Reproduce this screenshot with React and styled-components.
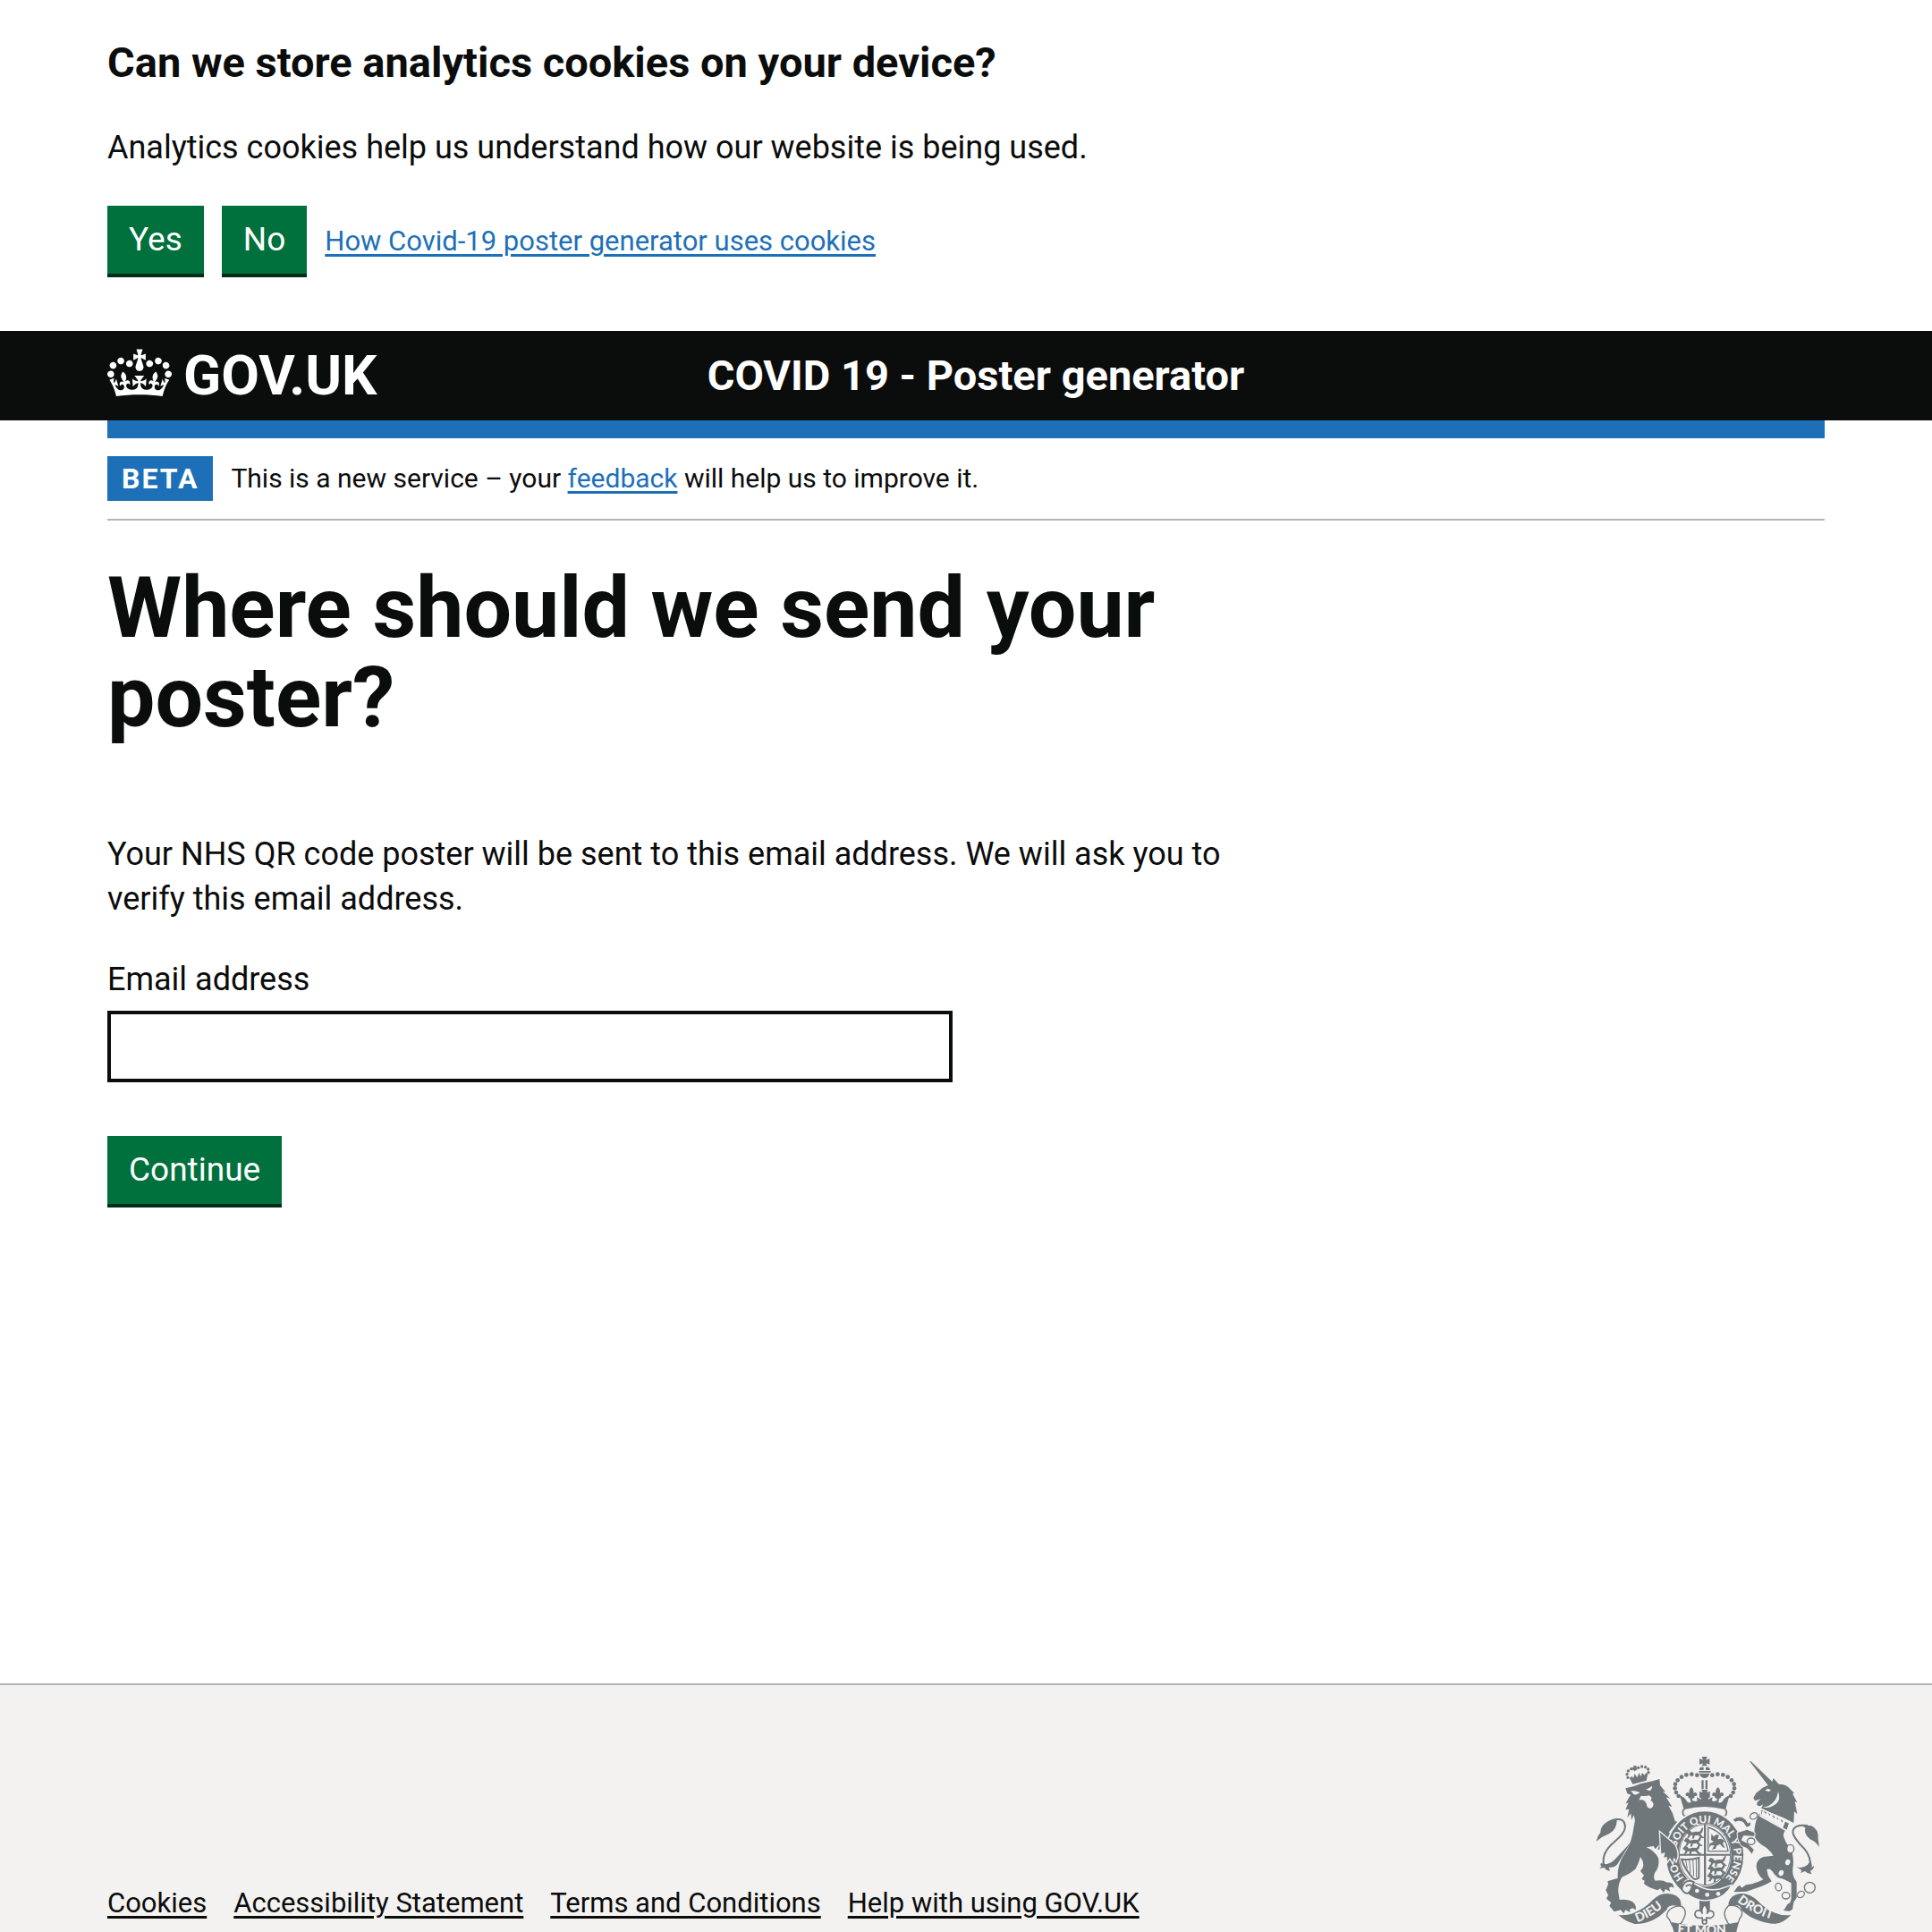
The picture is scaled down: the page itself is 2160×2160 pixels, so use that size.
import React from "react";
import styled, { createGlobalStyle, css } from "styled-components";

const ink = "#0b0c0c";
const blue = "#1d70b8";
const green = "#00703c";
const line = "#b1b4b6";
const stone = "#f3f2f1";
const crest = "#6f777b";

const GlobalStyle = createGlobalStyle`
  *, *::before, *::after { box-sizing: border-box; }
  body {
    margin: 0;
    background: #fff;
    color: ${ink};
    font-family: Roboto, "Liberation Sans", Arial, sans-serif;
    font-size: 36px;
    line-height: 50px;
  }
`;

const Page = styled.div`
  height: 100vh;
  overflow: hidden;
`;

const Container = styled.div`
  margin: 0 120px;
`;

const TwoThirds = styled.div`
  max-width: 1260px;
`;

const CookieBanner = styled.section`
  padding: 40px 0 60px;
`;

const BannerTitle = styled.h2`
  margin: 0 0 40px;
  font-size: 47px;
  line-height: 60px;
  font-weight: 700;
`;

const Paragraph = styled.p`
  margin: 0 0 40px;
`;

const ButtonRow = styled.div`
  display: flex;
  align-items: center;
  gap: 20px;
`;

const Button = styled.button`
  display: block;
  height: 80px;
  margin: 0;
  padding: 0 24px;
  border: 0;
  border-bottom: 4px solid #002d18;
  border-radius: 0;
  background: ${green};
  color: #fff;
  font: inherit;
  font-size: 37px;
  cursor: pointer;
`;

const Link = styled.a`
  color: ${(p) => (p.$dark ? ink : blue)};
  text-decoration: underline;
  text-decoration-thickness: 3px;
  text-underline-offset: 4px;
`;

const SmallLink = styled(Link)`
  font-size: 31px;
  line-height: 40px;
`;

const Header = styled.header`
  background: ${ink};
  color: #fff;
`;

const HeaderRow = styled(Container)`
  display: grid;
  grid-template-columns: 1fr 2fr;
  column-gap: 46px;
  align-items: center;
  height: 100px;
`;

const headerLink = css`
  color: #fff;
  font-weight: 700;
  text-decoration: none;
`;

const LogoLink = styled.a`
  ${headerLink}
  display: flex;
  align-items: flex-start;
  gap: 13px;
  font-size: 62px;
  line-height: 60px;
`;

const ServiceLink = styled.a`
  ${headerLink}
  font-size: 47px;
  line-height: 60px;
`;

const Crown = styled.svg`
  display: block;
  width: 72px;
  height: 54px;
  fill: currentColor;
`;

const BlueBar = styled.div`
  height: 20px;
  background: ${blue};
`;

const PhaseBanner = styled.div`
  display: flex;
  align-items: center;
  gap: 20px;
  padding: 20px 0;
  border-bottom: 2px solid ${line};
`;

const Tag = styled.strong`
  padding: 5px 16px;
  background: ${blue};
  color: #fff;
  font-size: 32px;
  line-height: 40px;
  letter-spacing: 2px;
`;

const PhaseText = styled.span`
  font-size: 30px;
  line-height: 40px;
`;

const Main = styled.main`
  min-height: 1300px;
  padding: 48px 0 60px;
`;

const Title = styled.h1`
  margin: 0 0 100px;
  font-size: 95px;
  line-height: 100px;
  font-weight: 700;
`;

const Field = styled.div`
  margin-bottom: 60px;
`;

const Label = styled.label`
  display: block;
  margin-bottom: 10px;
`;

const TextInput = styled.input`
  display: block;
  width: 75%;
  height: 80px;
  margin: 0;
  padding: 10px;
  border: 4px solid ${ink};
  border-radius: 0;
  background: #fff;
  font: inherit;
`;

const Footer = styled.footer`
  border-top: 2px solid ${line};
  background: ${stone};
  padding: 80px 0;
`;

const FooterRow = styled(Container)`
  display: flex;
  align-items: flex-end;
  justify-content: space-between;
  height: 264px;
`;

const FooterLinks = styled.ul`
  display: flex;
  gap: 30px;
  margin: 0 0 80px;
  padding: 0;
  list-style: none;
  line-height: 40px;
`;

const Arms = styled.svg`
  display: block;
  align-self: flex-start;
  width: 250px;
  height: 204px;
  margin-right: 6px;
  fill: ${crest};
`;

const ArmsText = styled.text`
  font-family: Lato, "Open Sans", sans-serif;
  font-size: ${(p) => p.$size}px;
  font-weight: 900;
  fill: ${stone};
`;

const Pearls = ({ points, r }) =>
  points.map(([cx, cy]) => <circle key={`${cx}-${cy}`} cx={cx} cy={cy} r={r} />);

const leftPearls = [
  [412, 134], [394, 131], [376, 133], [360, 140], [347, 151], [339, 164], [338, 178], [342, 192], [350, 204],
];
const rightPearls = leftPearls.map(([x, y]) => [875 - x, y]);
const lionPearls = [
  [180, 142], [177, 131], [181, 120], [191, 113], [201, 112],
  [215, 109], [227, 105], [239, 107], [248, 114], [249, 125],
];

const Fleur = ({ x, y }) => (
  <path
    transform={`translate(${x} ${y})`}
    d="M0-24c9 9 9 17 4 25 2-8 12-9 15-2 2 6-4 9-8 6 1 7-4 10-8 9v8h-6v-8c-4 1-9-2-8-9-4 3-10 0-8-6 3-7 13-6 15 2-5-8-5-16 4-25z"
  />
);

const Walker = ({ x, y }) => (
  <path
    transform={`translate(${x} ${y})`}
    d="M2-4l7-9 9 3 4 6 14-3 12 1 6-8 3-7 4 3-4 14-6 5 7 9 6 1-2 4-9-1-9-9-12 2-2 9-8 2 2-4 1-8-6-1-6 9-8 0 5-6 1-6-8-3z"
  />
);

function CrownLogo() {
  return (
    <Crown viewBox="0 0 132 97" aria-hidden="true">
      <path
        fillRule="evenodd"
        d="M25 30.2c3.5 1.5 7.7-.2 9.1-3.7 1.5-3.6-.2-7.8-3.9-9.2-3.6-1.4-7.6.3-9.1 3.9-1.4 3.5.3 7.5 3.9 9zM9 39.5c3.6 1.5 7.8-.2 9.2-3.7 1.5-3.6-.2-7.8-3.9-9.1-3.6-1.5-7.6.2-9.1 3.8-1.4 3.5.3 7.5 3.8 9zM4.4 57.2c3.5 1.5 7.7-.2 9.1-3.8 1.5-3.6-.2-7.7-3.9-9.1-3.5-1.5-7.6.3-9.1 3.8-1.4 3.5.3 7.6 3.9 9.1zm38.3-21.4c3.5 1.5 7.7-.2 9.1-3.8 1.5-3.6-.2-7.7-3.9-9.1-3.6-1.5-7.6.3-9.1 3.8-1.3 3.6.4 7.7 3.9 9.1zm64.4-5.6c-3.6 1.5-7.8-.2-9.1-3.7-1.5-3.6.2-7.8 3.8-9.2 3.6-1.4 7.7.3 9.2 3.9 1.3 3.5-.4 7.5-3.9 9zm15.9 9.3c-3.6 1.5-7.7-.2-9.1-3.7-1.5-3.6.2-7.8 3.7-9.1 3.6-1.5 7.7.2 9.2 3.8 1.5 3.5-.3 7.5-3.8 9zm4.7 17.7c-3.6 1.5-7.8-.2-9.2-3.8-1.5-3.6.2-7.7 3.9-9.1 3.6-1.5 7.7.3 9.2 3.8 1.3 3.5-.4 7.6-3.9 9.1zM89.3 35.8c-3.6 1.5-7.8-.2-9.2-3.8-1.4-3.6.2-7.7 3.9-9.1 3.6-1.5 7.7.3 9.2 3.8 1.4 3.6-.3 7.7-3.9 9.1zM69.7 17.7l8.9 4.7V9.3l-8.9 2.8c-.2-.3-.5-.6-.9-.9L72.4 0H59.6l3.5 11.2c-.3.3-.6.5-.9.9l-8.8-2.8v13.1l8.8-4.7c.3.3.6.7.9.9l-5 15.4v.1c-.2.8-.4 1.6-.4 2.4 0 4.1 3.1 7.5 7 8.1h.2c.3 0 .7.1 1 .1.4 0 .7 0 1-.1h.2c4-.6 7.1-4.1 7.1-8.1 0-.8-.1-1.7-.4-2.4V34l-5.1-15.4c.4-.2.7-.6 1-.9zM66 92.8c16.9 0 32.8 1.1 47.1 3.2 4-16.9 8.9-26.7 14-33.5l-9.6-3.4c1 4.9 1.1 7.2 0 10.2-1.5-1.4-3-4.3-4.2-8.7L108.6 76c2.8-2 5-3.2 7.5-3.3-4.4 9.4-10 11.9-13.6 11.2-4.3-.8-6.3-4.6-5.6-7.9 1-4.7 5.7-5.9 8-.5 4.3-8.7-3-11.4-7.6-8.8 7.1-7.2 7.9-13.5 2.1-21.1-8 6.1-8.1 12.3-4.5 20.8-4.7-5.4-12.1-2.5-9.5 6.2 3.4-5.2 7.9-2 7.2 3.1-.6 4.3-6.4 7.8-13.5 7.2-10.3-.9-10.9-8-11.2-13.8 2.5-.5 7.1 1.8 11 7.3L80.2 60c-4.1 4.4-8 5.3-12.3 5.4 1.4-4.4 8-11.6 8-11.6H55.5s6.4 7.2 7.9 11.6c-4.2-.1-8-1-12.3-5.4l1.4 16.4c3.9-5.5 8.5-7.7 10.9-7.3-.3 5.8-.9 12.8-11.1 13.8-7.2.6-12.9-2.9-13.5-7.2-.7-5 3.8-8.3 7.1-3.1 2.7-8.7-4.6-11.6-9.4-6.2 3.7-8.5 3.6-14.7-4.6-20.8-5.8 7.6-5 13.9 2.2 21.1-4.7-2.6-11.9.1-7.7 8.8 2.3-5.5 7.1-4.2 8.1.5.7 3.3-1.3 7.1-5.7 7.9-3.5.7-9-1.8-13.5-11.2 2.5.1 4.7 1.3 7.5 3.3l-4.7-15.4c-1.2 4.4-2.7 7.2-4.3 8.7-1.1-3-.9-5.3 0-10.2l-9.5 3.4c5 6.9 9.9 16.7 14 33.5 14.8-2.1 30.8-3.2 47.7-3.2z"
      />
    </Crown>
  );
}

function RoyalArms() {
  return (
    <Arms viewBox="72 72 750 612" role="img" aria-label="Royal coat of arms">
      <defs>
        <path id="garter" d="M372 482A98 108 0 1 1 501 485" />
        <path id="ribbonLeft" d="M211 627Q263 611 322 556" />
        <path id="ribbonRight" d="M546 558Q603 604 690 624" />
        <path id="ribbonMid" d="M346 664Q437 672 540 662" />
      </defs>

      {/* central crown */}
      <path d="M428 72h18l-4 11 12-5v20l-12-4 4 9h-18l4-9-12 4V78l12 5z" />
      <path d="M424 107h10v10h-15q1-7 5-10zm17 0h10q4 4 5 10h-15zM418 120h40v5h-40zM420 128h34q-3 14-17 16-14-2-17-16z" />
      <path d="M427 151h7v30h-7zm13 0h7v30h-7z" />
      <Pearls points={leftPearls} r={7} />
      <Pearls points={rightPearls} r={7} />
      <path d="M354 202q15 5 22 17 5 10 16 6l-4-13q13 14 25 8l-2-12q8 3 14 8l-1-16-4-9h35l-4 9-1 16q6-5 14-8l-2 12q12 6 25-8l-4 13q11 4 16-6 7-12 22-17l-13 45q-74-18-141 0z" />
      <path d="M420 188l12 6-5-11h21l-5 11 12-6v23l-12-6 4 13h-19l4-13-12 6z" />
      <Fleur x={393} y={198} />
      <Fleur x={482} y={198} />
      <path fill={stone} stroke={crest} strokeWidth="5" d="M372 246q65-17 131 0 8 3 8 13t-9 13q-65-24-129 0-9-3-9-13t8-13z" />

      {/* lion */}
      <Pearls points={lionPearls} r={5} />
      <path d="M200 101l5 2 4-1-1 5 5 2-4 4 3 5-6-1-3 5-3-5-5 1 2-5-4-3 5-2z" />
      <path d="M186 144l8-7 4 8 5-16 8 13 7-16 5 13 5-13 8 8 4-7 7 2-5 23-46 12z" />
      <path d="M172 178L198 172L222 163L262 154L286 147L288 168L306 190L297 188L322 212L308 208L328 240L316 236L330 262L338 288L346 290L318 325L335 355Q350 380 350 405L344 425L336 412L332 432L322 414L312 428L312 408L300 412L304 394L290 400L294 382L280 384L286 366L272 382L266 372L242 376Q270 388 282 412Q288 440 270 462Q264 478 272 488Q296 484 312 494Q334 492 334 512L326 508L318 512L322 524L306 516L300 528L288 514L280 520Q250 512 234 498L236 488L226 482L234 470L222 456L230 444Q236 428 222 408Q216 430 206 448Q190 464 160 476Q146 500 148 526L152 552Q178 550 190 556Q210 566 206 586L196 580L186 584L188 594L172 586L166 598L156 586L134 592L118 572L124 562L108 548L114 536L106 520L114 500L112 490L136 482L146 480Q144 440 162 408Q188 372 196 330L204 284L200 268L192 284L190 262L178 276L184 248L172 250L182 226L172 230L184 208L190 200L178 196Z" />
      <path fill={stone} d="M190 186q18 0 31 6-12 10-22 6zM240 182q12-5 22-12-2 15-10 16zM224 203q14 3 28-1l8 8-4 8q12 7 9 18-4 11-14 9-9-4-8-14l-6-10-10-5q-8 3-9-1z" />
      <path d="M74 356q5-20 14-30 0-30 42-45l14-3q-5 6-1 10-1 28-24 41-24 9-45 27z" />
      <path fill="none" stroke={crest} strokeWidth="6" d="M138 283q31-6 33 23 0 22-38 53-42 35-34 75" />
      <path d="M90 429q8 4 20 3 18-5 28-17l53-57-40 64q-10 24-35 21l4 12q-15-1-18-11l-17 2q5-5 7-7-7-3-2-10z" />

      {/* unicorn */}
      <path d="M588 87L593 88L664 156L668 144L686 164Q712 164 724 180L738 194L732 196L748 226L740 222L748 264L738 256L736 294L700 276L626 246L634 232Q618 244 612 232L614 224L626 214L606 220L601 210L610 194L632 176L650 168Z" />
      <path fill={stone} d="M640 184l10-5 10 5-8 6zM684 188q10 28-7 42-20 16-45 12 46-8 52-54z" />
      <path d="M622 262L714 314Q700 324 702 340Q708 360 722 376Q738 400 734 440Q728 470 746 492L746 545L736 560L732 584L722 590L702 588L716 566L724 562L728 548L728 496Q700 480 684 478Q672 470 664 456Q656 446 646 450L650 470L662 490Q640 504 608 514L578 524L535 526L548 508L556 504L562 512L576 502Q610 498 634 484Q616 470 612 448Q606 420 634 408L668 404Q650 378 632 370Q612 356 604 338L604 330Q604 290 622 262Z" />
      <path fill={crest} stroke={stone} strokeWidth="5" d="M626 247l97 48-9 26-90-50z" />
      <path fill={stone} d="M633 250l9 15 5-10 8 15 5-8 10 17 5-12 8 17 4-10 11 20 3-15 7 10-8 22-73-41z" />
      <g fill={stone}>
        <ellipse cx="716" cy="426" rx="8" ry="10" transform="rotate(25 716 426)" />
        <ellipse cx="694" cy="462" rx="8" ry="10" transform="rotate(25 694 462)" />
      </g>
      <g fill={stone} stroke={crest} strokeWidth="4">
        <ellipse cx="602" cy="271" rx="13" ry="10" transform="rotate(-30 602 271)" />
        <ellipse cx="725" cy="381" rx="12" ry="14" />
        <ellipse cx="685" cy="509" rx="10" ry="13" transform="rotate(-10 685 509)" />
        <ellipse cx="710" cy="538" rx="13" ry="11" />
        <ellipse cx="760" cy="534" rx="13" ry="10" transform="rotate(-35 760 534)" />
        <circle cx="790" cy="511" r="18" />
      </g>
      <path d="M764 305q14-3 30-2 27 11 24 45l4 27q-13-19-31-26-22-17-16-39z" />
      <path fill="none" stroke={crest} strokeWidth="6" d="M783 303q-48-6-50 22 1 18 38 55 25 28 21 68" />
      <path d="M745 441q20 8 38-7l8-12q8 7 5 22l8-7q0 13-12 18l4 11q-14-1-22-10l-15 6 4-9z" />

      {/* garter and shield */}
      <ellipse cx="438" cy="402" rx="134" ry="152" fill={stone} />
      <ellipse cx="438" cy="402" rx="109" ry="126" fill="none" stroke={crest} strokeWidth="41" />
      <ellipse cx="438" cy="401" rx="86" ry="102" fill={stone} stroke={crest} strokeWidth="3" />
      <path d="M435 299h7v203h-7zM352 398h172v6H352z" />
      <Walker x={372} y={330} />
      <Walker x={366} y={357} />
      <Walker x={362} y={384} />
      <Walker x={448} y={424} />
      <Walker x={446} y={450} />
      <Walker x={444} y={476} />
      <path fill="none" stroke={crest} strokeWidth="4" d="M449 309v80h67q-8-62-67-80z" />
      <path d="M460 331l8 9 10-8 8 5-5 12 13-2 10 8-6 8 8 15-8-2-9-11-12 6-3 10-12 2 8-14-12 1-6 9 2-15 14-7-9-6z" />
      <path fill="none" stroke={crest} strokeWidth="6" d="M360 416q30 4 58-5v67q-9 8-18 3-29-30-40-65z" />
      <path fill="none" stroke={crest} strokeWidth="3" d="M374 419l5 28M386 419l4 43M398 417l3 55M409 415l1 62" />
      <path stroke={stone} strokeWidth="4" d="M365 501q4-14 18-17l22 15q40 26 83 17l41-14q-20 40-65 50-49 10-86-21z" />
      <g fill={stone} stroke={crest} strokeWidth="6">
        <path d="M401 493q-17-11-31 2-16 19-3 30 14 13 24-5z" />
        <path fill="none" d="M374 507q17-12 27 5" />
      </g>
      <g fill={stone}>
        <circle cx="412" cy="522" r="7" />
        <circle cx="446" cy="535" r="7" />
        <circle cx="483" cy="532" r="7" />
      </g>
      <ArmsText $size={35}>
        <textPath href="#garter" startOffset="1%">HO</textPath>
        <textPath href="#garter" startOffset="23%">SOIT QUI MAL Y PENSE</textPath>
      </ArmsText>

      {/* paws laid over the garter */}
      <path stroke={stone} strokeWidth="4" d="M286 322L338 366Q350 388 348 408L342 426L335 414L331 433L321 415L311 429L309 410L298 414L302 396L290 400Z" />
      <path stroke={stone} strokeWidth="3" d="M532 284Q544 270 562 274Q580 282 582 294L592 290L592 304L578 310L566 292L552 288L540 292ZM606 326L580 316L546 326Q544 350 560 372L580 380L596 400L604 384L592 372L578 360L562 352L568 338L606 340Z" />
      <ellipse cx="593" cy="356" rx="13" ry="11" fill={stone} stroke={crest} strokeWidth="4" />

      {/* motto ribbon */}
      <path d="M148 603q31 3 56-9 36-15 59-41 30-31 68-19 29 8 28 40l-30-3q-19 4-17 12-45 51-109 50-30-7-55-30z" />
      <path d="M727 603q-30 4-57-8-35-18-55-40-37-34-73-20-25 9-25 38l28-3q17 4 15 16 29 27 60 36 32 12 57 10 25-3 50-29z" />
      <path fill={stone} stroke={crest} strokeWidth="4" d="M360 574q-30-3-45 17-10 15 4 27l11 23q31-5 34-20 19-33-4-47zM517 572q29-5 43 14 8 12-5 29l-10 28q-30-5-33-20-18-30 5-51z" />
      <path d="M326 627q111 24 225 0l-12 57H340z" />
      <ArmsText $size={42}>
        <textPath href="#ribbonLeft">DIEU</textPath>
      </ArmsText>
      <ArmsText $size={42}>
        <textPath href="#ribbonRight">DROIT</textPath>
      </ArmsText>
      <ArmsText $size={42}>
        <textPath href="#ribbonMid">ET MON</textPath>
      </ArmsText>

      {/* plant badge */}
      <path d="M420 554q17 5 35 0v35h-35z" />
      <g fill={stone} stroke={crest} strokeWidth="5">
        <path d="M437 568q14 14 8 31 7-15 20-7 10 14-9 22l-12-2q-1 6 0 9h-14l-1-9q-20 5-24-10 0-17 16-14 7 2 9 11-6-17 7-31z" />
        <circle cx="437" cy="626" r="7" />
      </g>
    </Arms>
  );
}

const footerItems = ["Cookies", "Accessibility Statement", "Terms and Conditions", "Help with using GOV.UK"];

export default function App() {
  return (
    <Page>
      <GlobalStyle />
      <CookieBanner aria-labelledby="cookie-title">
        <Container>
          <BannerTitle id="cookie-title">Can we store analytics cookies on your device?</BannerTitle>
          <Paragraph>Analytics cookies help us understand how our website is being used.</Paragraph>
          <ButtonRow>
            <Button type="button">Yes</Button>
            <Button type="button">No</Button>
            <SmallLink href="#cookies">How Covid-19 poster generator uses cookies</SmallLink>
          </ButtonRow>
        </Container>
      </CookieBanner>

      <Header>
        <HeaderRow>
          <LogoLink href="#home">
            <CrownLogo />
            <span>GOV.UK</span>
          </LogoLink>
          <ServiceLink href="#service">COVID 19 - Poster generator</ServiceLink>
        </HeaderRow>
      </Header>

      <Container>
        <BlueBar />
        <PhaseBanner>
          <Tag>BETA</Tag>
          <PhaseText>
            This is a new service – your <Link href="#feedback">feedback</Link> will help us to improve it.
          </PhaseText>
        </PhaseBanner>

        <Main>
          <TwoThirds>
            <Title>Where should we send your poster?</Title>
            <Paragraph>
              Your NHS QR code poster will be sent to this email address. We will ask you to verify this email
              address.
            </Paragraph>
            <form onSubmit={(e) => e.preventDefault()}>
              <Field>
                <Label htmlFor="email">Email address</Label>
                <TextInput id="email" name="email" type="email" autoComplete="email" />
              </Field>
              <Button type="submit">Continue</Button>
            </form>
          </TwoThirds>
        </Main>
      </Container>

      <Footer>
        <FooterRow>
          <FooterLinks>
            {footerItems.map((item) => (
              <li key={item}>
                <SmallLink $dark href={`#${item.toLowerCase().replace(/\W+/g, "-")}`}>
                  {item}
                </SmallLink>
              </li>
            ))}
          </FooterLinks>
          <RoyalArms />
        </FooterRow>
      </Footer>
    </Page>
  );
}
